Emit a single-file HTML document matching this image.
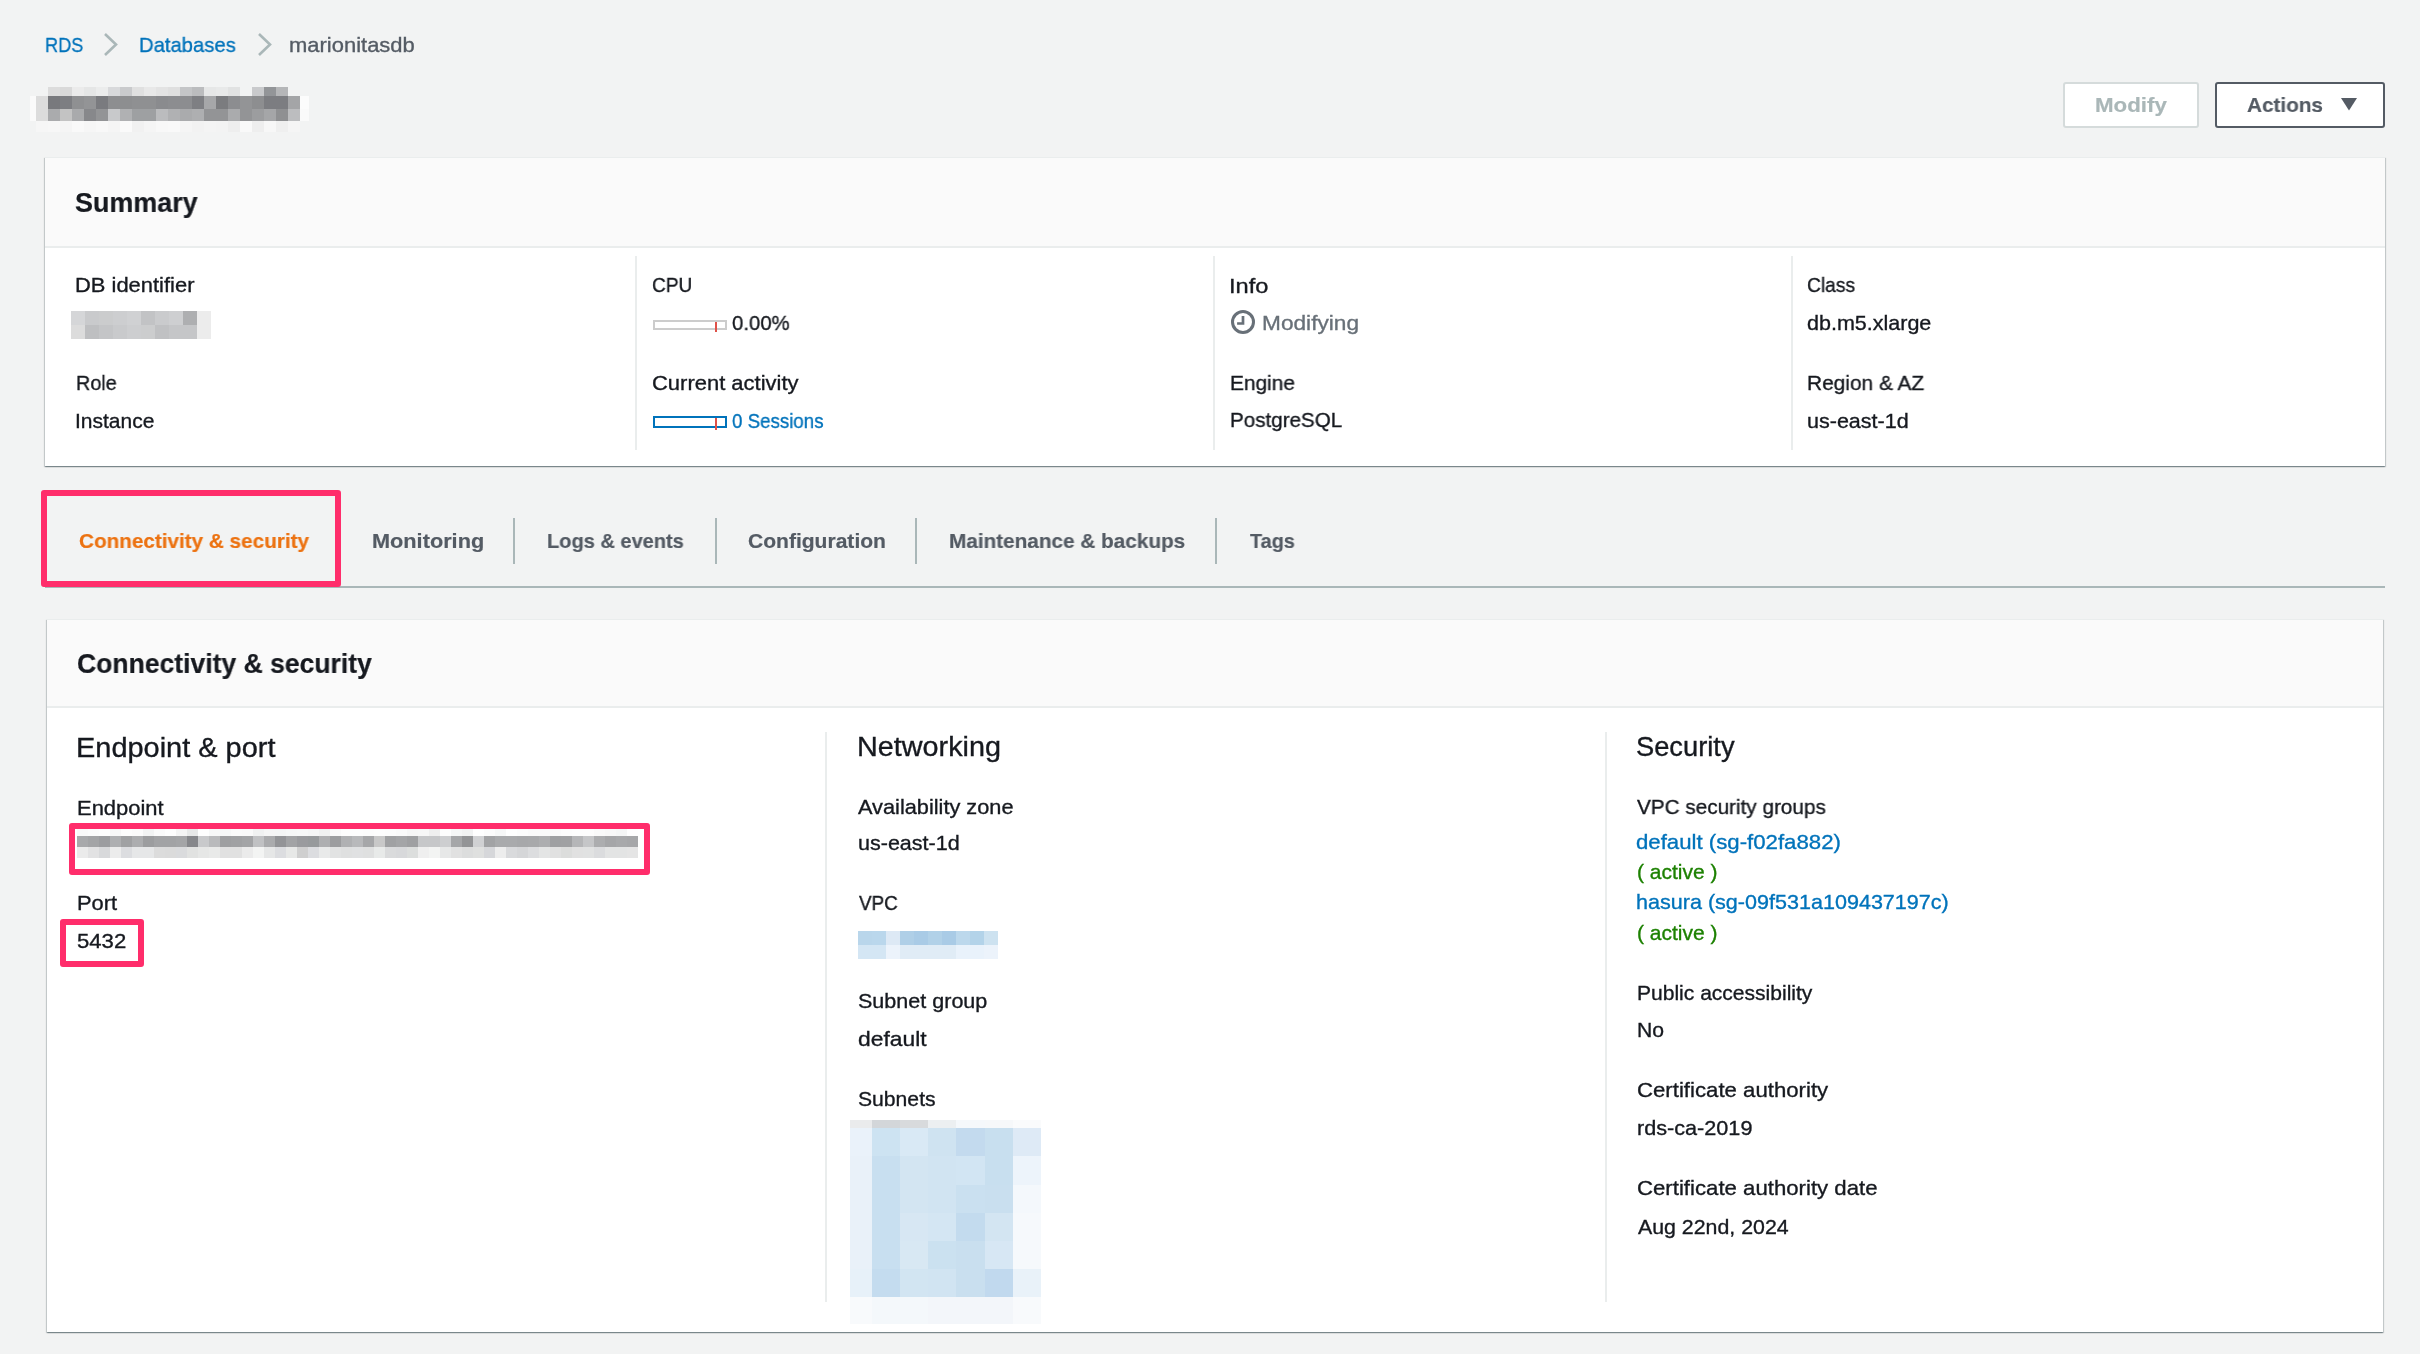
<!DOCTYPE html>
<html><head><meta charset="utf-8"><title>RDS marionitasdb</title>
<style>
html,body{margin:0;padding:0;}
body{width:2420px;height:1354px;background:#f2f3f3;position:relative;overflow:hidden;font-family:"Liberation Sans", sans-serif;}
body>div,body>i{position:absolute;}
.t{white-space:pre;transform-origin:0 0;font-family:"Liberation Sans", sans-serif;-webkit-text-stroke:0.35px currentColor;will-change:transform;}
.t.b{-webkit-text-stroke:0.2px currentColor;}
</style></head><body>
<svg style="position:absolute;left:102px;top:31.5px" width="18" height="25" viewBox="0 0 18 25"><path d="M3 2 L14 12.5 L3 23" fill="none" stroke="#aab7b8" stroke-width="2.6"/></svg>
<svg style="position:absolute;left:256px;top:31.5px" width="18" height="25" viewBox="0 0 18 25"><path d="M3 2 L14 12.5 L3 23" fill="none" stroke="#aab7b8" stroke-width="2.6"/></svg>
<i style="left:48px;top:87px;width:12px;height:9px;background:#dcdcdc"></i><i style="left:60px;top:87px;width:12px;height:9px;background:#d9d9d9"></i><i style="left:72px;top:87px;width:12px;height:9px;background:#ebebeb"></i><i style="left:84px;top:87px;width:12px;height:9px;background:#e5e6e6"></i><i style="left:96px;top:87px;width:12px;height:9px;background:#ebecec"></i><i style="left:108px;top:87px;width:12px;height:9px;background:#d8d9db"></i><i style="left:120px;top:87px;width:12px;height:9px;background:#c9cacc"></i><i style="left:132px;top:87px;width:12px;height:9px;background:#e0e0e0"></i><i style="left:144px;top:87px;width:12px;height:9px;background:#e8e8e8"></i><i style="left:156px;top:87px;width:12px;height:9px;background:#e3e3e3"></i><i style="left:168px;top:87px;width:12px;height:9px;background:#dfdfdf"></i><i style="left:180px;top:87px;width:12px;height:9px;background:#c4c5c7"></i><i style="left:192px;top:87px;width:12px;height:9px;background:#bbbcbe"></i><i style="left:204px;top:87px;width:12px;height:9px;background:#e6e7e7"></i><i style="left:216px;top:87px;width:12px;height:9px;background:#e8e9e9"></i><i style="left:228px;top:87px;width:12px;height:9px;background:#e1e2e2"></i><i style="left:252px;top:87px;width:12px;height:9px;background:#c9cacc"></i><i style="left:264px;top:87px;width:12px;height:9px;background:#939598"></i><i style="left:276px;top:87px;width:12px;height:9px;background:#b5b6b8"></i><i style="left:30px;top:96px;width:6px;height:13px;background:#fafafa"></i><i style="left:36px;top:96px;width:12px;height:13px;background:#dcdcdc"></i><i style="left:48px;top:96px;width:12px;height:13px;background:#78797d"></i><i style="left:60px;top:96px;width:12px;height:13px;background:#7d7e82"></i><i style="left:72px;top:96px;width:12px;height:13px;background:#8f9092"></i><i style="left:84px;top:96px;width:12px;height:13px;background:#939496"></i><i style="left:96px;top:96px;width:12px;height:13px;background:#7a7b7f"></i><i style="left:108px;top:96px;width:12px;height:13px;background:#8d8e90"></i><i style="left:120px;top:96px;width:12px;height:13px;background:#8d8e90"></i><i style="left:132px;top:96px;width:12px;height:13px;background:#8f9092"></i><i style="left:144px;top:96px;width:12px;height:13px;background:#8f9092"></i><i style="left:156px;top:96px;width:12px;height:13px;background:#8a8b8e"></i><i style="left:168px;top:96px;width:12px;height:13px;background:#8c8d90"></i><i style="left:180px;top:96px;width:12px;height:13px;background:#8c8d90"></i><i style="left:192px;top:96px;width:12px;height:13px;background:#7e7f83"></i><i style="left:204px;top:96px;width:12px;height:13px;background:#a6a7a9"></i><i style="left:216px;top:96px;width:12px;height:13px;background:#7b7c7f"></i><i style="left:228px;top:96px;width:12px;height:13px;background:#8c8d90"></i><i style="left:240px;top:96px;width:12px;height:13px;background:#939496"></i><i style="left:252px;top:96px;width:12px;height:13px;background:#8d8e90"></i><i style="left:264px;top:96px;width:12px;height:13px;background:#7c7d81"></i><i style="left:276px;top:96px;width:12px;height:13px;background:#7c7d81"></i><i style="left:288px;top:96px;width:12px;height:13px;background:#a4a5a7"></i><i style="left:300px;top:96px;width:9px;height:13px;background:#fcfcfc"></i><i style="left:30px;top:109px;width:6px;height:12px;background:#fafafa"></i><i style="left:36px;top:109px;width:12px;height:12px;background:#dcdcdc"></i><i style="left:48px;top:109px;width:12px;height:12px;background:#aaabad"></i><i style="left:60px;top:109px;width:12px;height:12px;background:#c3c3c3"></i><i style="left:72px;top:109px;width:12px;height:12px;background:#a9aaac"></i><i style="left:84px;top:109px;width:12px;height:12px;background:#87888b"></i><i style="left:96px;top:109px;width:12px;height:12px;background:#939496"></i><i style="left:108px;top:109px;width:12px;height:12px;background:#c8c9cb"></i><i style="left:120px;top:109px;width:12px;height:12px;background:#b0b1b3"></i><i style="left:132px;top:109px;width:12px;height:12px;background:#9ea0a2"></i><i style="left:144px;top:109px;width:12px;height:12px;background:#9ea0a2"></i><i style="left:156px;top:109px;width:12px;height:12px;background:#bbbcbe"></i><i style="left:168px;top:109px;width:12px;height:12px;background:#b0b1b3"></i><i style="left:180px;top:109px;width:12px;height:12px;background:#aaabad"></i><i style="left:192px;top:109px;width:12px;height:12px;background:#aeafb1"></i><i style="left:204px;top:109px;width:12px;height:12px;background:#939496"></i><i style="left:216px;top:109px;width:12px;height:12px;background:#939496"></i><i style="left:228px;top:109px;width:12px;height:12px;background:#aaabad"></i><i style="left:240px;top:109px;width:12px;height:12px;background:#939496"></i><i style="left:252px;top:109px;width:12px;height:12px;background:#9c9d9f"></i><i style="left:264px;top:109px;width:12px;height:12px;background:#a5a6a8"></i><i style="left:276px;top:109px;width:12px;height:12px;background:#8f9092"></i><i style="left:288px;top:109px;width:12px;height:12px;background:#bcbdbf"></i><i style="left:300px;top:109px;width:9px;height:12px;background:#fafafa"></i><i style="left:36px;top:121px;width:12px;height:11px;background:#f6f6f6"></i><i style="left:48px;top:121px;width:12px;height:11px;background:#f7f7f7"></i><i style="left:60px;top:121px;width:12px;height:11px;background:#f5f5f5"></i><i style="left:72px;top:121px;width:12px;height:11px;background:#f9f9f9"></i><i style="left:84px;top:121px;width:12px;height:11px;background:#f6f6f6"></i><i style="left:96px;top:121px;width:12px;height:11px;background:#f8f8f8"></i><i style="left:108px;top:121px;width:12px;height:11px;background:#f5f5f5"></i><i style="left:120px;top:121px;width:12px;height:11px;background:#fafafa"></i><i style="left:132px;top:121px;width:12px;height:11px;background:#f1f1f1"></i><i style="left:144px;top:121px;width:12px;height:11px;background:#f5f5f5"></i><i style="left:156px;top:121px;width:12px;height:11px;background:#f8f8f8"></i><i style="left:168px;top:121px;width:12px;height:11px;background:#f9f9f9"></i><i style="left:180px;top:121px;width:12px;height:11px;background:#f5f5f5"></i><i style="left:192px;top:121px;width:12px;height:11px;background:#f2f2f2"></i><i style="left:204px;top:121px;width:12px;height:11px;background:#f4f4f4"></i><i style="left:216px;top:121px;width:12px;height:11px;background:#f3f3f3"></i><i style="left:228px;top:121px;width:12px;height:11px;background:#eeeeee"></i><i style="left:240px;top:121px;width:12px;height:11px;background:#f9f9f9"></i><i style="left:252px;top:121px;width:12px;height:11px;background:#eeeeee"></i><i style="left:264px;top:121px;width:12px;height:11px;background:#f7f7f7"></i><i style="left:276px;top:121px;width:12px;height:11px;background:#efefef"></i><i style="left:288px;top:121px;width:12px;height:11px;background:#f5f5f5"></i>
<div style="left:2063px;top:82px;width:136px;height:46px;border:2px solid #d5dbdb;border-radius:3px;background:#fff;box-sizing:border-box"></div>
<div style="left:2215px;top:82px;width:170px;height:46px;border:2px solid #545b64;border-radius:3px;background:#fff;box-sizing:border-box"></div>
<svg style="position:absolute;left:2341px;top:98px" width="16" height="13" viewBox="0 0 16 13"><path d="M0 0 H16 L8 12.5 Z" fill="#545b64"/></svg>
<div style="left:45px;top:157px;width:2340px;height:309px;background:#fff;box-shadow:0 1px 1px 0 rgba(0,28,36,.3),1px 1px 1px 0 rgba(0,28,36,.15),-1px 1px 1px 0 rgba(0,28,36,.15);"></div>
<div style="left:45px;top:157px;width:2340px;height:91px;background:#fafafa;border-top:1px solid #eaeded;border-bottom:2px solid #eaeded;box-sizing:border-box"></div>
<div style="left:635px;top:256px;width:2px;height:194px;background:#eaeded"></div>
<div style="left:1213px;top:256px;width:2px;height:194px;background:#eaeded"></div>
<div style="left:1791px;top:256px;width:2px;height:194px;background:#eaeded"></div>
<i style="left:71px;top:311px;width:14px;height:14px;background:#d5d6d8"></i><i style="left:85px;top:311px;width:14px;height:14px;background:#c9cacc"></i><i style="left:99px;top:311px;width:14px;height:14px;background:#cbcccd"></i><i style="left:113px;top:311px;width:14px;height:14px;background:#cdced0"></i><i style="left:127px;top:311px;width:14px;height:14px;background:#d0d1d3"></i><i style="left:141px;top:311px;width:14px;height:14px;background:#c2c3c5"></i><i style="left:155px;top:311px;width:14px;height:14px;background:#cacbcd"></i><i style="left:169px;top:311px;width:14px;height:14px;background:#cecfd1"></i><i style="left:183px;top:311px;width:14px;height:14px;background:#aeafb1"></i><i style="left:197px;top:311px;width:14px;height:14px;background:#ececec"></i><i style="left:71px;top:325px;width:14px;height:14px;background:#dcdcdc"></i><i style="left:85px;top:325px;width:14px;height:14px;background:#bebfc1"></i><i style="left:99px;top:325px;width:14px;height:14px;background:#c4c5c7"></i><i style="left:113px;top:325px;width:14px;height:14px;background:#c9cacc"></i><i style="left:127px;top:325px;width:14px;height:14px;background:#cdced0"></i><i style="left:141px;top:325px;width:14px;height:14px;background:#cccdce"></i><i style="left:155px;top:325px;width:14px;height:14px;background:#c0c1c3"></i><i style="left:169px;top:325px;width:14px;height:14px;background:#c5c6c8"></i><i style="left:183px;top:325px;width:14px;height:14px;background:#c5c6c8"></i><i style="left:197px;top:325px;width:14px;height:14px;background:#ececec"></i>
<div style="left:653px;top:320px;width:74px;height:10px;border:2px solid #cccccc;box-sizing:border-box"></div>
<div style="left:715px;top:322px;width:2px;height:10px;background:#df5148"></div>
<div style="left:653px;top:416px;width:74px;height:12px;border:2px solid #0073bb;box-sizing:border-box"></div>
<div style="left:715px;top:418px;width:2px;height:12px;background:#df5148"></div>
<svg style="position:absolute;left:1230px;top:309px" width="26" height="26" viewBox="0 0 26 26"><circle cx="13" cy="13" r="10.5" fill="none" stroke="#687078" stroke-width="3"/><path d="M13 7.1 V14.5 H7.1" fill="none" stroke="#687078" stroke-width="2.7"/></svg>
<div style="left:45px;top:586px;width:2340px;height:2px;background:#aab7b8"></div>
<div style="left:715px;top:518px;width:2px;height:46px;background:#aab7b8"></div>
<div style="left:915px;top:518px;width:2px;height:46px;background:#aab7b8"></div>
<div style="left:1215px;top:518px;width:2px;height:46px;background:#aab7b8"></div>
<div style="left:513px;top:518px;width:2px;height:46px;background:#aab7b8"></div>
<div style="left:41px;top:490px;width:300px;height:97px;border:6px solid #ff2d6b;border-radius:3px;box-sizing:border-box"></div>
<div style="left:47px;top:619px;width:2336px;height:713px;background:#fff;box-shadow:0 1px 1px 0 rgba(0,28,36,.3),1px 1px 1px 0 rgba(0,28,36,.15),-1px 1px 1px 0 rgba(0,28,36,.15);"></div>
<div style="left:47px;top:619px;width:2336px;height:89px;background:#fafafa;border-top:1px solid #eaeded;border-bottom:2px solid #eaeded;box-sizing:border-box"></div>
<div style="left:825px;top:732px;width:2px;height:570px;background:#eaeded"></div>
<div style="left:1605px;top:732px;width:2px;height:570px;background:#eaeded"></div>
<i style="left:77px;top:829px;width:11px;height:7px;background:#f9f9f9"></i><i style="left:88px;top:829px;width:11px;height:7px;background:#fbfbfb"></i><i style="left:99px;top:829px;width:11px;height:7px;background:#fdfdfd"></i><i style="left:110px;top:829px;width:11px;height:7px;background:#f7f7f7"></i><i style="left:121px;top:829px;width:11px;height:7px;background:#fdfdfd"></i><i style="left:132px;top:829px;width:11px;height:7px;background:#fbfbfb"></i><i style="left:143px;top:829px;width:11px;height:7px;background:#f2f3f3"></i><i style="left:154px;top:829px;width:11px;height:7px;background:#fafafa"></i><i style="left:165px;top:829px;width:11px;height:7px;background:#fdfdfd"></i><i style="left:176px;top:829px;width:11px;height:7px;background:#f4f4f4"></i><i style="left:187px;top:829px;width:11px;height:7px;background:#e7e8e8"></i><i style="left:198px;top:829px;width:11px;height:7px;background:#fefefe"></i><i style="left:209px;top:829px;width:11px;height:7px;background:#f7f8f8"></i><i style="left:220px;top:829px;width:11px;height:7px;background:#f6f7f7"></i><i style="left:231px;top:829px;width:11px;height:7px;background:#fafafa"></i><i style="left:242px;top:829px;width:11px;height:7px;background:#f9f9f9"></i><i style="left:253px;top:829px;width:11px;height:7px;background:#f0f1f1"></i><i style="left:264px;top:829px;width:11px;height:7px;background:#f5f5f5"></i><i style="left:275px;top:829px;width:11px;height:7px;background:#f4f5f5"></i><i style="left:286px;top:829px;width:11px;height:7px;background:#f6f7f7"></i><i style="left:297px;top:829px;width:11px;height:7px;background:#f7f8f8"></i><i style="left:308px;top:829px;width:11px;height:7px;background:#f5f6f6"></i><i style="left:319px;top:829px;width:11px;height:7px;background:#f0f1f1"></i><i style="left:330px;top:829px;width:11px;height:7px;background:#f9f9f9"></i><i style="left:341px;top:829px;width:11px;height:7px;background:#fdfdfd"></i><i style="left:352px;top:829px;width:11px;height:7px;background:#fdfdfd"></i><i style="left:363px;top:829px;width:11px;height:7px;background:#fcfcfc"></i><i style="left:374px;top:829px;width:11px;height:7px;background:#fdfdfd"></i><i style="left:385px;top:829px;width:11px;height:7px;background:#fcfcfc"></i><i style="left:396px;top:829px;width:11px;height:7px;background:#fafafa"></i><i style="left:407px;top:829px;width:11px;height:7px;background:#f6f6f6"></i><i style="left:418px;top:829px;width:11px;height:7px;background:#f7f7f7"></i><i style="left:429px;top:829px;width:11px;height:7px;background:#efefef"></i><i style="left:440px;top:829px;width:11px;height:7px;background:#fdfdfd"></i><i style="left:451px;top:829px;width:11px;height:7px;background:#f5f6f6"></i><i style="left:462px;top:829px;width:11px;height:7px;background:#f1f2f2"></i><i style="left:473px;top:829px;width:11px;height:7px;background:#fefefe"></i><i style="left:484px;top:829px;width:11px;height:7px;background:#fbfbfb"></i><i style="left:495px;top:829px;width:11px;height:7px;background:#f6f7f7"></i><i style="left:506px;top:829px;width:11px;height:7px;background:#fefefe"></i><i style="left:517px;top:829px;width:11px;height:7px;background:#fcfcfc"></i><i style="left:528px;top:829px;width:11px;height:7px;background:#fafafa"></i><i style="left:539px;top:829px;width:11px;height:7px;background:#fafafa"></i><i style="left:550px;top:829px;width:11px;height:7px;background:#fafafa"></i><i style="left:561px;top:829px;width:11px;height:7px;background:#fcfcfc"></i><i style="left:572px;top:829px;width:11px;height:7px;background:#fdfdfd"></i><i style="left:583px;top:829px;width:11px;height:7px;background:#fdfdfd"></i><i style="left:594px;top:829px;width:11px;height:7px;background:#fafafa"></i><i style="left:605px;top:829px;width:11px;height:7px;background:#f8f8f8"></i><i style="left:616px;top:829px;width:11px;height:7px;background:#f5f6f6"></i><i style="left:627px;top:829px;width:11px;height:7px;background:#fefefe"></i><i style="left:77px;top:836px;width:11px;height:11px;background:#a8a9ab"></i><i style="left:88px;top:836px;width:11px;height:11px;background:#a3a4a6"></i><i style="left:99px;top:836px;width:11px;height:11px;background:#9c9da0"></i><i style="left:110px;top:836px;width:11px;height:11px;background:#aeafb1"></i><i style="left:121px;top:836px;width:11px;height:11px;background:#a0a1a3"></i><i style="left:132px;top:836px;width:11px;height:11px;background:#acadaf"></i><i style="left:143px;top:836px;width:11px;height:11px;background:#9c9d9f"></i><i style="left:154px;top:836px;width:11px;height:11px;background:#a2a3a5"></i><i style="left:165px;top:836px;width:11px;height:11px;background:#a2a3a5"></i><i style="left:176px;top:836px;width:11px;height:11px;background:#a4a5a7"></i><i style="left:187px;top:836px;width:11px;height:11px;background:#86878b"></i><i style="left:198px;top:836px;width:11px;height:11px;background:#c8c9cb"></i><i style="left:209px;top:836px;width:11px;height:11px;background:#b9babc"></i><i style="left:220px;top:836px;width:11px;height:11px;background:#9e9fa1"></i><i style="left:231px;top:836px;width:11px;height:11px;background:#a0a1a3"></i><i style="left:242px;top:836px;width:11px;height:11px;background:#a3a4a6"></i><i style="left:253px;top:836px;width:11px;height:11px;background:#c0c1c3"></i><i style="left:264px;top:836px;width:11px;height:11px;background:#aaabad"></i><i style="left:275px;top:836px;width:11px;height:11px;background:#939497"></i><i style="left:286px;top:836px;width:11px;height:11px;background:#a2a3a5"></i><i style="left:297px;top:836px;width:11px;height:11px;background:#9a9b9e"></i><i style="left:308px;top:836px;width:11px;height:11px;background:#979a9c"></i><i style="left:319px;top:836px;width:11px;height:11px;background:#aeafb1"></i><i style="left:330px;top:836px;width:11px;height:11px;background:#9c9d9f"></i><i style="left:341px;top:836px;width:11px;height:11px;background:#b0b1b3"></i><i style="left:352px;top:836px;width:11px;height:11px;background:#b8b9bb"></i><i style="left:363px;top:836px;width:11px;height:11px;background:#a6a7a9"></i><i style="left:374px;top:836px;width:11px;height:11px;background:#c8c8c8"></i><i style="left:385px;top:836px;width:11px;height:11px;background:#a0a1a3"></i><i style="left:396px;top:836px;width:11px;height:11px;background:#a4a5a7"></i><i style="left:407px;top:836px;width:11px;height:11px;background:#9fa0a2"></i><i style="left:418px;top:836px;width:11px;height:11px;background:#c6c7c9"></i><i style="left:429px;top:836px;width:11px;height:11px;background:#c6c7c9"></i><i style="left:440px;top:836px;width:11px;height:11px;background:#cdced0"></i><i style="left:451px;top:836px;width:11px;height:11px;background:#a5a6a8"></i><i style="left:462px;top:836px;width:11px;height:11px;background:#939496"></i><i style="left:473px;top:836px;width:11px;height:11px;background:#d0d1d3"></i><i style="left:484px;top:836px;width:11px;height:11px;background:#a2a3a5"></i><i style="left:495px;top:836px;width:11px;height:11px;background:#a9aaac"></i><i style="left:506px;top:836px;width:11px;height:11px;background:#a9aaac"></i><i style="left:517px;top:836px;width:11px;height:11px;background:#a7a8aa"></i><i style="left:528px;top:836px;width:11px;height:11px;background:#a8a9ab"></i><i style="left:539px;top:836px;width:11px;height:11px;background:#adaeb0"></i><i style="left:550px;top:836px;width:11px;height:11px;background:#9fa0a2"></i><i style="left:561px;top:836px;width:11px;height:11px;background:#a0a1a3"></i><i style="left:572px;top:836px;width:11px;height:11px;background:#b5b6b8"></i><i style="left:583px;top:836px;width:11px;height:11px;background:#c5c6c8"></i><i style="left:594px;top:836px;width:11px;height:11px;background:#acadaf"></i><i style="left:605px;top:836px;width:11px;height:11px;background:#a5a6a8"></i><i style="left:616px;top:836px;width:11px;height:11px;background:#a8a9ab"></i><i style="left:627px;top:836px;width:11px;height:11px;background:#a6a7a9"></i><i style="left:77px;top:847px;width:11px;height:11px;background:#ebebeb"></i><i style="left:88px;top:847px;width:11px;height:11px;background:#e2e2e3"></i><i style="left:99px;top:847px;width:11px;height:11px;background:#d8d9db"></i><i style="left:110px;top:847px;width:11px;height:11px;background:#ececec"></i><i style="left:121px;top:847px;width:11px;height:11px;background:#dcdde0"></i><i style="left:132px;top:847px;width:11px;height:11px;background:#e6e7e8"></i><i style="left:143px;top:847px;width:11px;height:11px;background:#e6e7e8"></i><i style="left:154px;top:847px;width:11px;height:11px;background:#dcdcdc"></i><i style="left:165px;top:847px;width:11px;height:11px;background:#dbdbdb"></i><i style="left:176px;top:847px;width:11px;height:11px;background:#dadbdd"></i><i style="left:187px;top:847px;width:11px;height:11px;background:#e1e2e1"></i><i style="left:198px;top:847px;width:11px;height:11px;background:#e6e7e6"></i><i style="left:209px;top:847px;width:11px;height:11px;background:#e9eae9"></i><i style="left:220px;top:847px;width:11px;height:11px;background:#e1e1e1"></i><i style="left:231px;top:847px;width:11px;height:11px;background:#e1e1e1"></i><i style="left:242px;top:847px;width:11px;height:11px;background:#ebebeb"></i><i style="left:253px;top:847px;width:11px;height:11px;background:#f3f4f3"></i><i style="left:264px;top:847px;width:11px;height:11px;background:#e6e7e7"></i><i style="left:275px;top:847px;width:11px;height:11px;background:#dcdde0"></i><i style="left:286px;top:847px;width:11px;height:11px;background:#e7e8e7"></i><i style="left:297px;top:847px;width:11px;height:11px;background:#cfcfcf"></i><i style="left:308px;top:847px;width:11px;height:11px;background:#dcdde0"></i><i style="left:319px;top:847px;width:11px;height:11px;background:#e9eaea"></i><i style="left:330px;top:847px;width:11px;height:11px;background:#e2e3e3"></i><i style="left:341px;top:847px;width:11px;height:11px;background:#dfe0e0"></i><i style="left:352px;top:847px;width:11px;height:11px;background:#e0e1e2"></i><i style="left:363px;top:847px;width:11px;height:11px;background:#dfe0e0"></i><i style="left:374px;top:847px;width:11px;height:11px;background:#e8eae9"></i><i style="left:385px;top:847px;width:11px;height:11px;background:#dadbdc"></i><i style="left:396px;top:847px;width:11px;height:11px;background:#d8d9db"></i><i style="left:407px;top:847px;width:11px;height:11px;background:#dcdedd"></i><i style="left:418px;top:847px;width:11px;height:11px;background:#efefef"></i><i style="left:429px;top:847px;width:11px;height:11px;background:#f3f4f3"></i><i style="left:440px;top:847px;width:11px;height:11px;background:#e7e8e8"></i><i style="left:451px;top:847px;width:11px;height:11px;background:#e1e1e1"></i><i style="left:462px;top:847px;width:11px;height:11px;background:#dcdddd"></i><i style="left:473px;top:847px;width:11px;height:11px;background:#dfe0df"></i><i style="left:484px;top:847px;width:11px;height:11px;background:#d6d7da"></i><i style="left:495px;top:847px;width:11px;height:11px;background:#ededed"></i><i style="left:506px;top:847px;width:11px;height:11px;background:#d9dadc"></i><i style="left:517px;top:847px;width:11px;height:11px;background:#d5d6d8"></i><i style="left:528px;top:847px;width:11px;height:11px;background:#dcdddf"></i><i style="left:539px;top:847px;width:11px;height:11px;background:#e4e5e5"></i><i style="left:550px;top:847px;width:11px;height:11px;background:#e1e1e1"></i><i style="left:561px;top:847px;width:11px;height:11px;background:#dcdddc"></i><i style="left:572px;top:847px;width:11px;height:11px;background:#e1e1e1"></i><i style="left:583px;top:847px;width:11px;height:11px;background:#e1e2e2"></i><i style="left:594px;top:847px;width:11px;height:11px;background:#dbdcde"></i><i style="left:605px;top:847px;width:11px;height:11px;background:#e3e4e4"></i><i style="left:616px;top:847px;width:11px;height:11px;background:#e3e4e4"></i><i style="left:627px;top:847px;width:11px;height:11px;background:#e5e5e5"></i>
<div style="left:69px;top:823px;width:581px;height:52px;border:6px solid #ff2d6b;border-radius:3px;box-sizing:border-box"></div>
<div style="left:60px;top:919px;width:84px;height:48px;border:6px solid #ff2d6b;border-radius:3px;box-sizing:border-box"></div>
<i style="left:858px;top:931px;width:14px;height:14px;background:#b9d6eb"></i><i style="left:872px;top:931px;width:14px;height:14px;background:#bad7ec"></i><i style="left:886px;top:931px;width:14px;height:14px;background:#dde9f5"></i><i style="left:900px;top:931px;width:14px;height:14px;background:#afcfe7"></i><i style="left:914px;top:931px;width:14px;height:14px;background:#a9cbe6"></i><i style="left:928px;top:931px;width:14px;height:14px;background:#b1d1e8"></i><i style="left:942px;top:931px;width:14px;height:14px;background:#a9cbe6"></i><i style="left:956px;top:931px;width:14px;height:14px;background:#bcd8ec"></i><i style="left:970px;top:931px;width:14px;height:14px;background:#b3d3e9"></i><i style="left:984px;top:931px;width:14px;height:14px;background:#cde2f0"></i><i style="left:858px;top:945px;width:14px;height:14px;background:#d4e6f4"></i><i style="left:872px;top:945px;width:14px;height:14px;background:#d4e6f4"></i><i style="left:886px;top:945px;width:14px;height:14px;background:#ecf3fb"></i><i style="left:900px;top:945px;width:14px;height:14px;background:#e0ecf6"></i><i style="left:914px;top:945px;width:14px;height:14px;background:#e0ecf6"></i><i style="left:928px;top:945px;width:14px;height:14px;background:#e0ecf6"></i><i style="left:942px;top:945px;width:14px;height:14px;background:#e0ecf6"></i><i style="left:956px;top:945px;width:14px;height:14px;background:#e9f2fb"></i><i style="left:970px;top:945px;width:14px;height:14px;background:#e9f2fb"></i><i style="left:984px;top:945px;width:14px;height:14px;background:#ecf3fb"></i>
<i style="left:850px;top:1120px;width:22px;height:8px;background:#eaebec"></i><i style="left:872px;top:1120px;width:28px;height:8px;background:#d3d6d9"></i><i style="left:900px;top:1120px;width:28px;height:8px;background:#d8dadc"></i><i style="left:928px;top:1120px;width:28px;height:8px;background:#eceff1"></i><i style="left:956px;top:1120px;width:29px;height:8px;background:#f5f8fb"></i><i style="left:985px;top:1120px;width:28px;height:8px;background:#f6f8fa"></i><i style="left:1013px;top:1120px;width:28px;height:8px;background:#fafbfc"></i><i style="left:850px;top:1128px;width:22px;height:28px;background:#eaf2fa"></i><i style="left:872px;top:1128px;width:28px;height:28px;background:#cde3f2"></i><i style="left:900px;top:1128px;width:28px;height:28px;background:#d9e9f5"></i><i style="left:928px;top:1128px;width:28px;height:28px;background:#cfe3f1"></i><i style="left:956px;top:1128px;width:29px;height:28px;background:#c3daee"></i><i style="left:985px;top:1128px;width:28px;height:28px;background:#c8dfef"></i><i style="left:1013px;top:1128px;width:28px;height:28px;background:#deeaf6"></i><i style="left:850px;top:1156px;width:22px;height:29px;background:#e9f1f9"></i><i style="left:872px;top:1156px;width:28px;height:29px;background:#c8dff0"></i><i style="left:900px;top:1156px;width:28px;height:29px;background:#d3e5f2"></i><i style="left:928px;top:1156px;width:28px;height:29px;background:#d1e4f2"></i><i style="left:956px;top:1156px;width:29px;height:29px;background:#d2e5f3"></i><i style="left:985px;top:1156px;width:28px;height:29px;background:#c8dfef"></i><i style="left:1013px;top:1156px;width:28px;height:29px;background:#edf4fb"></i><i style="left:850px;top:1185px;width:22px;height:28px;background:#e9f1f9"></i><i style="left:872px;top:1185px;width:28px;height:28px;background:#c8dff0"></i><i style="left:900px;top:1185px;width:28px;height:28px;background:#d3e5f2"></i><i style="left:928px;top:1185px;width:28px;height:28px;background:#d1e4f2"></i><i style="left:956px;top:1185px;width:29px;height:28px;background:#cae0f0"></i><i style="left:985px;top:1185px;width:28px;height:28px;background:#c9dfef"></i><i style="left:1013px;top:1185px;width:28px;height:28px;background:#f4f8fc"></i><i style="left:850px;top:1213px;width:22px;height:28px;background:#e9f1f9"></i><i style="left:872px;top:1213px;width:28px;height:28px;background:#c8dff0"></i><i style="left:900px;top:1213px;width:28px;height:28px;background:#d7e7f3"></i><i style="left:928px;top:1213px;width:28px;height:28px;background:#d4e6f3"></i><i style="left:956px;top:1213px;width:29px;height:28px;background:#c3dbee"></i><i style="left:985px;top:1213px;width:28px;height:28px;background:#d3e5f2"></i><i style="left:1013px;top:1213px;width:28px;height:28px;background:#f6f9fc"></i><i style="left:850px;top:1241px;width:22px;height:28px;background:#e9f1f9"></i><i style="left:872px;top:1241px;width:28px;height:28px;background:#c8dff0"></i><i style="left:900px;top:1241px;width:28px;height:28px;background:#d8e8f3"></i><i style="left:928px;top:1241px;width:28px;height:28px;background:#cbe1f0"></i><i style="left:956px;top:1241px;width:29px;height:28px;background:#c9dfef"></i><i style="left:985px;top:1241px;width:28px;height:28px;background:#d7e7f4"></i><i style="left:1013px;top:1241px;width:28px;height:28px;background:#f6f9fc"></i><i style="left:850px;top:1269px;width:22px;height:28px;background:#e7f1f9"></i><i style="left:872px;top:1269px;width:28px;height:28px;background:#c4dcef"></i><i style="left:900px;top:1269px;width:28px;height:28px;background:#d2e5f2"></i><i style="left:928px;top:1269px;width:28px;height:28px;background:#d1e4f2"></i><i style="left:956px;top:1269px;width:29px;height:28px;background:#c9dfef"></i><i style="left:985px;top:1269px;width:28px;height:28px;background:#c1d9ee"></i><i style="left:1013px;top:1269px;width:28px;height:28px;background:#e9f2f9"></i><i style="left:850px;top:1297px;width:22px;height:27px;background:#f8fafc"></i><i style="left:872px;top:1297px;width:28px;height:27px;background:#f4f8fb"></i><i style="left:900px;top:1297px;width:28px;height:27px;background:#f4f8fb"></i><i style="left:928px;top:1297px;width:28px;height:27px;background:#f3f6fa"></i><i style="left:956px;top:1297px;width:29px;height:27px;background:#f3f6fa"></i><i style="left:985px;top:1297px;width:28px;height:27px;background:#f3f6fa"></i><i style="left:1013px;top:1297px;width:28px;height:27px;background:#f8fafc"></i>
<div class="t" style="left:45.33px;top:34.00px;font-size:21px;line-height:21px;color:#0073bb;transform:scaleX(0.8651)">RDS</div>
<div class="t" style="left:138.64px;top:34.00px;font-size:21px;line-height:21px;color:#0073bb;transform:scaleX(0.9636)">Databases</div>
<div class="t" style="left:289.05px;top:34.00px;font-size:21px;line-height:21px;color:#545b64;transform:scaleX(1.0462)">marionitasdb</div>
<div class="t b" style="left:2095.34px;top:93.70px;font-size:21px;line-height:21px;font-weight:bold;color:#aab7b8;transform:scaleX(1.0612)">Modify</div>
<div class="t b" style="left:2247.40px;top:93.70px;font-size:21px;line-height:21px;font-weight:bold;color:#545b64;transform:scaleX(0.9868)">Actions</div>
<div class="t b" style="left:74.90px;top:190.00px;font-size:27px;line-height:27px;font-weight:bold;color:#16191f;transform:scaleX(0.9967)">Summary</div>
<div class="t" style="left:74.96px;top:273.80px;font-size:21px;line-height:21px;color:#16191f;transform:scaleX(1.0442)">DB identifier</div>
<div class="t" style="left:75.66px;top:372.10px;font-size:21px;line-height:21px;color:#16191f;transform:scaleX(0.9429)">Role</div>
<div class="t" style="left:74.61px;top:409.80px;font-size:21px;line-height:21px;color:#16191f;transform:scaleX(0.9961)">Instance</div>
<div class="t" style="left:652.49px;top:274.30px;font-size:21px;line-height:21px;color:#16191f;transform:scaleX(0.9071)">CPU</div>
<div class="t" style="left:732.23px;top:311.60px;font-size:21px;line-height:21px;color:#16191f;transform:scaleX(0.9690)">0.00%</div>
<div class="t" style="left:652.35px;top:371.90px;font-size:21px;line-height:21px;color:#16191f;transform:scaleX(1.0460)">Current activity</div>
<div class="t" style="left:732.11px;top:409.60px;font-size:21px;line-height:21px;color:#0073bb;transform:scaleX(0.8911)">0 Sessions</div>
<div class="t" style="left:1228.75px;top:274.50px;font-size:21px;line-height:21px;color:#16191f;transform:scaleX(1.1250)">Info</div>
<div class="t" style="left:1261.72px;top:311.80px;font-size:21px;line-height:21px;color:#687078;transform:scaleX(1.0795)">Modifying</div>
<div class="t" style="left:1230.01px;top:371.60px;font-size:21px;line-height:21px;color:#16191f;transform:scaleX(0.9922)">Engine</div>
<div class="t" style="left:1230.02px;top:409.30px;font-size:21px;line-height:21px;color:#16191f;transform:scaleX(0.9805)">PostgreSQL</div>
<div class="t" style="left:1807.38px;top:274.20px;font-size:21px;line-height:21px;color:#16191f;transform:scaleX(0.9157)">Class</div>
<div class="t" style="left:1807.28px;top:312.10px;font-size:21px;line-height:21px;color:#16191f;transform:scaleX(1.0242)">db.m5.xlarge</div>
<div class="t" style="left:1807.31px;top:371.90px;font-size:21px;line-height:21px;color:#16191f;transform:scaleX(0.9940)">Region &amp; AZ</div>
<div class="t" style="left:1807.28px;top:409.80px;font-size:21px;line-height:21px;color:#16191f;transform:scaleX(1.0247)">us-east-1d</div>
<div class="t b" style="left:78.61px;top:530.30px;font-size:21px;line-height:21px;font-weight:bold;color:#ec7211;transform:scaleX(0.9853)">Connectivity &amp; security</div>
<div class="t b" style="left:372.07px;top:530.30px;font-size:21px;line-height:21px;font-weight:bold;color:#545b64;transform:scaleX(1.0340)">Monitoring</div>
<div class="t b" style="left:547.35px;top:530.10px;font-size:21px;line-height:21px;font-weight:bold;color:#545b64;transform:scaleX(0.9535)">Logs &amp; events</div>
<div class="t b" style="left:748.40px;top:530.10px;font-size:21px;line-height:21px;font-weight:bold;color:#545b64;transform:scaleX(1.0022)">Configuration</div>
<div class="t b" style="left:949.41px;top:530.10px;font-size:21px;line-height:21px;font-weight:bold;color:#545b64;transform:scaleX(0.9873)">Maintenance &amp; backups</div>
<div class="t b" style="left:1249.60px;top:530.10px;font-size:21px;line-height:21px;font-weight:bold;color:#545b64;transform:scaleX(0.9447)">Tags</div>
<div class="t b" style="left:76.92px;top:650.70px;font-size:27px;line-height:27px;font-weight:bold;color:#16191f;transform:scaleX(0.9826)">Connectivity &amp; security</div>
<div class="t" style="left:76.16px;top:734.50px;font-size:27px;line-height:27px;color:#16191f;transform:scaleX(1.0717)">Endpoint &amp; port</div>
<div class="t" style="left:77.25px;top:796.50px;font-size:21px;line-height:21px;color:#16191f;transform:scaleX(1.0451)">Endpoint</div>
<div class="t" style="left:77.16px;top:892.20px;font-size:21px;line-height:21px;color:#16191f;transform:scaleX(1.0421)">Port</div>
<div class="t" style="left:76.75px;top:929.90px;font-size:21px;line-height:21px;color:#16191f;transform:scaleX(1.0533)">5432</div>
<div class="t" style="left:856.97px;top:734.00px;font-size:27px;line-height:27px;color:#16191f;transform:scaleX(1.0659)">Networking</div>
<div class="t" style="left:858.10px;top:795.90px;font-size:21px;line-height:21px;color:#16191f;transform:scaleX(1.0353)">Availability zone</div>
<div class="t" style="left:857.58px;top:832.00px;font-size:21px;line-height:21px;color:#16191f;transform:scaleX(1.0247)">us-east-1d</div>
<div class="t" style="left:858.60px;top:891.60px;font-size:21px;line-height:21px;color:#16191f;transform:scaleX(0.8976)">VPC</div>
<div class="t" style="left:857.77px;top:989.90px;font-size:21px;line-height:21px;color:#16191f;transform:scaleX(1.0256)">Subnet group</div>
<div class="t" style="left:857.51px;top:1027.70px;font-size:21px;line-height:21px;color:#16191f;transform:scaleX(1.0871)">default</div>
<div class="t" style="left:857.79px;top:1087.90px;font-size:21px;line-height:21px;color:#16191f;transform:scaleX(1.0067)">Subnets</div>
<div class="t" style="left:1635.99px;top:734.20px;font-size:27px;line-height:27px;color:#16191f;transform:scaleX(1.0103)">Security</div>
<div class="t" style="left:1637.00px;top:796.30px;font-size:21px;line-height:21px;color:#16191f;transform:scaleX(0.9864)">VPC security groups</div>
<div class="t" style="left:1635.94px;top:831.40px;font-size:21px;line-height:21px;color:#0073bb;transform:scaleX(1.0573)">default (sg-f02fa882)</div>
<div class="t" style="left:1636.60px;top:860.90px;font-size:21px;line-height:21px;color:#1d8102;transform:scaleX(0.9987)">( active )</div>
<div class="t" style="left:1635.97px;top:891.40px;font-size:21px;line-height:21px;color:#0073bb;transform:scaleX(1.0264)">hasura (sg-09f531a109437197c)</div>
<div class="t" style="left:1636.60px;top:921.50px;font-size:21px;line-height:21px;color:#1d8102;transform:scaleX(0.9987)">( active )</div>
<div class="t" style="left:1636.60px;top:982.00px;font-size:21px;line-height:21px;color:#16191f;transform:scaleX(1.0017)">Public accessibility</div>
<div class="t" style="left:1636.59px;top:1019.20px;font-size:21px;line-height:21px;color:#16191f;transform:scaleX(1.0080)">No</div>
<div class="t" style="left:1636.54px;top:1079.20px;font-size:21px;line-height:21px;color:#16191f;transform:scaleX(1.0567)">Certificate authority</div>
<div class="t" style="left:1636.57px;top:1117.40px;font-size:21px;line-height:21px;color:#16191f;transform:scaleX(1.0300)">rds-ca-2019</div>
<div class="t" style="left:1636.54px;top:1177.00px;font-size:21px;line-height:21px;color:#16191f;transform:scaleX(1.0566)">Certificate authority date</div>
<div class="t" style="left:1637.60px;top:1215.60px;font-size:21px;line-height:21px;color:#16191f;transform:scaleX(1.0155)">Aug 22nd, 2024</div>
</body></html>
